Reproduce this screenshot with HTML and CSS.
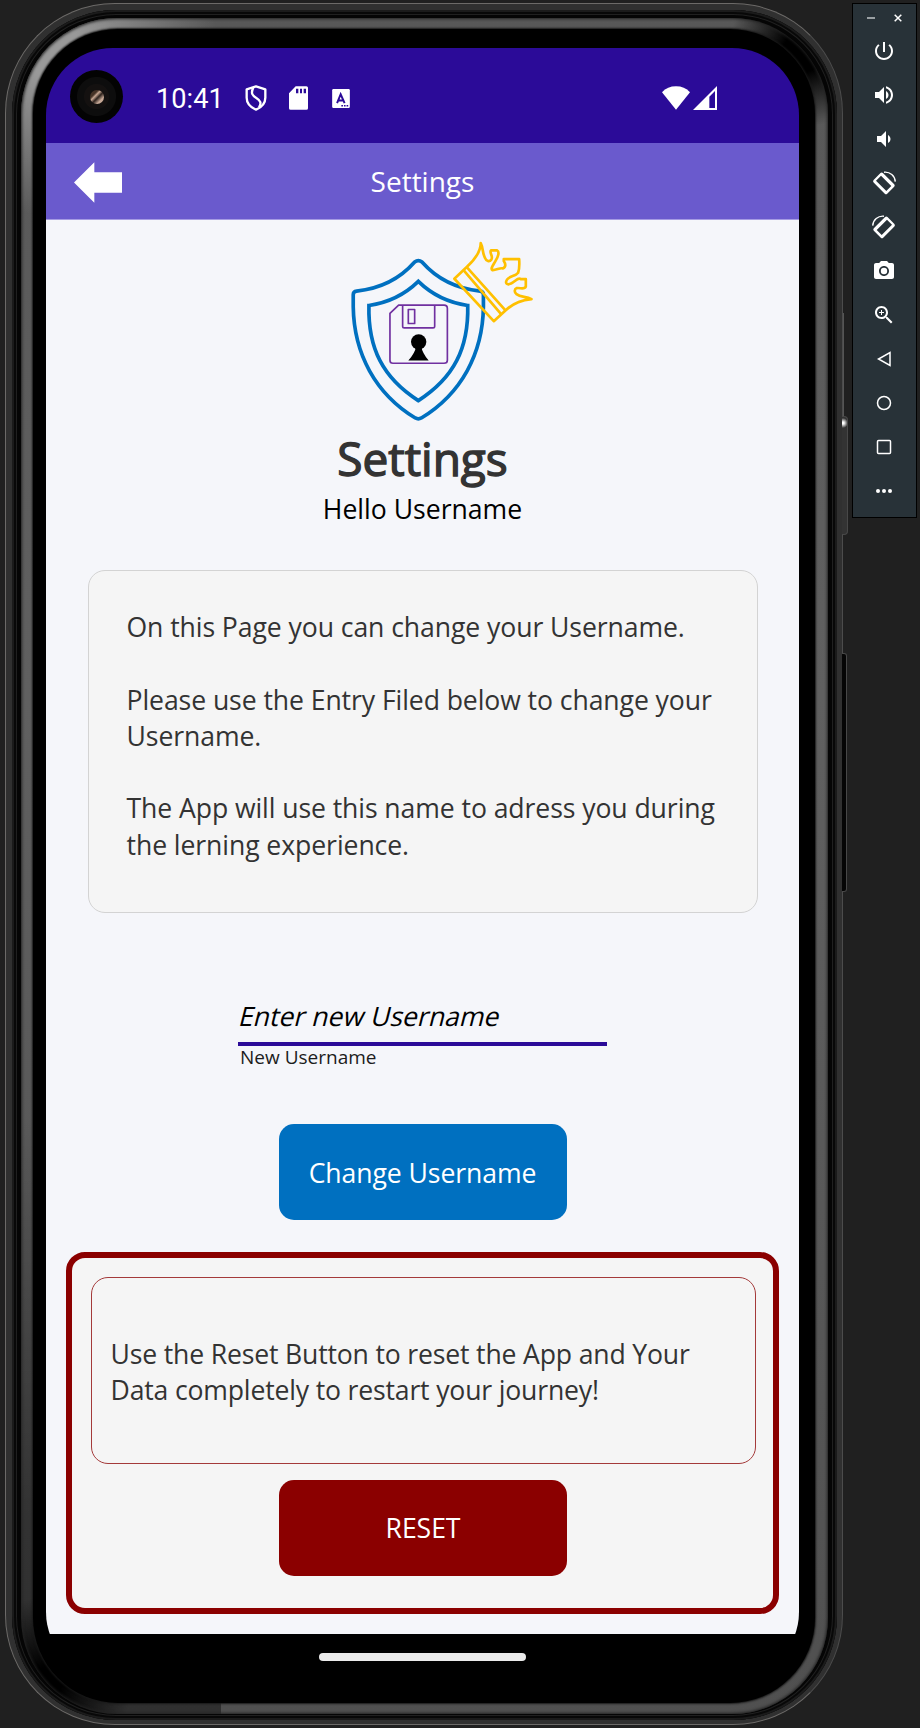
FILE: index.html
```html
<!DOCTYPE html>
<html lang="en">
<head>
<meta charset="utf-8">
<title>Settings</title>
<link rel="stylesheet" href="styles.css">
</head>
<body>
<div class="desktop">
  <div class="phone">
    <span class="side-line"></span>
    <span class="side-button power"></span>
    <span class="side-button volume"></span>
    <div class="groove">
      <div class="shine">
        <div class="bezel">
          <div class="screen">
            <div class="status">
              <span class="camera"><i></i></span>
              <span class="time">10:41</span>
              <svg class="st-shield" viewBox="0 0 66 78"><path d="M33 4 L61 13 V38 C61 56 49 67 33 74 C17 67 5 56 5 38 V13 Z" fill="none" stroke="#fff" stroke-width="7" stroke-linejoin="round"/><path d="M25 8 C16 25 23 32 34 39 C47 47 50 55 42 67" fill="none" stroke="#fff" stroke-width="7"/></svg>
              <svg class="st-sd" viewBox="0 0 57 71"><path fill="#fff" fill-rule="evenodd" d="M20 0H52Q57 0 57 5V66Q57 71 52 71H5Q0 71 0 66V21ZM21 8V21H28V8ZM33 8V21H39V8ZM44 8V21H51V8Z"/></svg>
              <svg class="st-a" viewBox="0 0 54 58"><rect width="54" height="58" rx="4" fill="#fff"/><path d="M15 43 L26 16 L38 43 M19 35H34" fill="none" stroke="#2b0b98" stroke-width="6"/><path d="M28 51h5m3 0h5m3 0h5" stroke="#2b0b98" stroke-width="5"/></svg>
              <svg class="st-wifi" viewBox="0 0 86 72"><path fill="#fff" d="M0 18 Q17 0 43 0 T86 18 L43 72Z"/></svg>
              <svg class="st-cell" viewBox="0 0 72 72"><path fill="#fff" fill-rule="evenodd" d="M72 0V72H0ZM66 15L49 32V66H66Z"/></svg>
            </div>
            <header class="appbar">
              <svg class="back" viewBox="0 0 144 122"><path fill="#fff" d="M0 61L61 0V30H144V92H61V122Z"/></svg>
              <span class="bar-title">Settings</span>
            </header>
            <main class="content">
              <svg class="logo" viewBox="-32.5 60 680 548" fill="none" stroke-linejoin="round">
                <g stroke="#0070c0">
                  <path stroke-width="11" d="M284 126 Q295 118 306 126 C350 176 412 206 480 213 Q490 214 490 224 V260 C488 400 424 520 304 593 Q295 598 286 593 C166 520 102 400 100 260 V224 Q100 214 110 213 C178 206 240 176 284 126Z"/>
                  <path stroke-width="11" stroke-linejoin="miter" d="M295 184 C334 222 386 248 443 256 C446 385 401 473 295 541 C189 473 144 385 147 256 C204 248 256 222 295 184Z"/>
                </g>
                <g stroke="#7030a0" stroke-width="5">
                  <path d="M236 255H372Q382 255 382 265V420Q382 429 372 429H219Q210 429 210 420V280Z"/>
                  <path d="M248 255V318Q248 323 253 323H339Q344 323 344 318V255"/>
                  <path d="M265 268H284V310H265Z"/>
                </g>
                <circle cx="296" cy="365" r="23" fill="#000"/>
                <path d="M288 378H304Q306 397 326 421H265Q286 397 288 378Z" fill="#000"/>
                <g stroke="#ffc000" stroke-width="8">
                  <path d="M403 176L440 141C466 117 482 95 482 69C489 82 487 98 494 112C499 124 508 127 514 118C520 107 506 97 513 91H531C539 95 534 111 526 123C517 138 511 146 517 150C528 151 540 142 548 145C558 141 557 132 551 123V117H597C598 130 598 146 594 158C586 169 569 167 561 178C553 191 562 196 573 190C586 184 593 171 602 177H617V199C613 210 600 202 590 204C582 207 582 217 589 222C602 232 618 228 634 237C600 240 575 253 556 271L521 303Z"/>
                  <path d="M431 151L543 282M440 141L556 271"/>
                </g>
              </svg>
              <h1 class="title">Settings</h1>
              <p class="hello">Hello Username</p>
              <section class="card">
                <p>On this Page you can change your Username.</p>
                <p>Please use the Entry Filed below to change your<br>Username.</p>
                <p>The App will use this name to adress you during<br>the lerning experience.</p>
              </section>
              <div class="field">
                <div class="entry"><span class="placeholder">Enter new Username</span></div>
                <label class="caption">New Username</label>
              </div>
              <button class="btn change">Change Username</button>
              <section class="danger">
                <div class="warning"><p>Use the Reset Button to reset the App and Your<br>Data completely to restart your journey!</p></div>
                <button class="btn reset">RESET</button>
              </section>
            </main>
            <nav class="gesture"><span class="pill"></span></nav>
          </div>
        </div>
      </div>
    </div>
  </div>

  <aside class="tools">
    <div class="window">
      <svg viewBox="0 0 8 8"><path d="M0 4H8" stroke="#9aa0a3" stroke-width="2"/></svg>
      <svg viewBox="0 0 8 8"><path d="M.7 .7L7.3 7.3M7.3 .7L.7 7.3" stroke="#fff" stroke-width="1.5"/></svg>
    </div>
    <svg viewBox="0 0 24 24"><path d="M13 3h-2v10h2V3zm4.83 2.17l-1.42 1.42C17.99 7.86 19 9.81 19 12c0 3.87-3.13 7-7 7s-7-3.13-7-7c0-2.19 1.01-4.14 2.58-5.42L6.17 5.17C4.23 6.82 3 9.26 3 12c0 4.97 4.03 9 9 9s9-4.03 9-9c0-2.74-1.23-5.18-3.17-6.83z"/></svg>
    <svg viewBox="0 0 24 24"><path d="M3 9v6h4l5 5V4L7 9H3zm13.5 3c0-1.77-1.02-3.29-2.5-4.03v8.05c1.48-.73 2.5-2.25 2.5-4.02zM14 3.23v2.06c2.89.86 5 3.54 5 6.71s-2.11 5.85-5 6.71v2.06c4.01-.91 7-4.49 7-8.77s-2.99-7.86-7-8.77z"/></svg>
    <svg viewBox="0 0 24 24"><path d="M18.5 12c0-1.77-1.02-3.29-2.5-4.03v8.05c1.48-.73 2.5-2.25 2.5-4.02zM5 9v6h4l5 5V4L9 9H5z"/></svg>
    <svg viewBox="0 0 24 24"><path fill-rule="evenodd" d="M8.500 2.100Q9.700 1 10.900 2.100L22.200 13.300Q23.300 14.500 22.200 15.700L15.200 22.700Q14 23.800 12.800 22.700L1.600 11.400Q.5 10.200 1.600 9ZM9 4.800L4 9.800L14.300 20.100L19.300 15.100Z"/><path d="M12 1.200C18 .5 23 5 23.300 10.600" fill="none" stroke="#fff" stroke-width="1.400"/></svg>
    <svg viewBox="0 0 24 24"><g transform="matrix(-1 0 0 1 24 0)"><path fill-rule="evenodd" d="M8.500 2.100Q9.700 1 10.900 2.100L22.200 13.300Q23.300 14.500 22.200 15.700L15.200 22.700Q14 23.800 12.800 22.700L1.600 11.400Q.5 10.200 1.600 9ZM9 4.800L4 9.800L14.300 20.100L19.300 15.100Z"/><path d="M12 1.200C18 .5 23 5 23.300 10.600" fill="none" stroke="#fff" stroke-width="1.400"/></g></svg>
    <svg viewBox="0 0 24 24"><path fill-rule="evenodd" d="M9 2L7.170 4H4c-1.100 0-2 .9-2 2v12c0 1.100.9 2 2 2h16c1.100 0 2-.9 2-2V6c0-1.100-.9-2-2-2h-3.170L15 2H9zm3 15c-2.760 0-5-2.240-5-5s2.240-5 5-5 5 2.240 5 5-2.240 5-5 5z"/><circle cx="12" cy="12" r="3.200"/></svg>
    <svg viewBox="0 0 24 24"><path d="M15.500 14h-.79l-.28-.27C15.410 12.590 16 11.110 16 9.500 16 5.910 13.090 3 9.500 3S3 5.910 3 9.500 5.910 16 9.500 16c1.610 0 3.090-.59 4.230-1.570l.27.28v.79l5 4.990L20.490 19l-4.990-5zm-6 0C7.010 14 5 11.990 5 9.500S7.010 5 9.500 5 14 7.010 14 9.500 11.990 14 9.500 14zM12 10h-2v2H9v-2H7V9h2V7h1v2h2v1z"/></svg>
    <svg class="line" viewBox="0 0 24 24"><path d="M18 5.500V18.500L6.500 12Z"/></svg>
    <svg class="line" viewBox="0 0 24 24"><circle cx="12" cy="12" r="6.500"/></svg>
    <svg class="line" viewBox="0 0 24 24"><rect x="5.500" y="5.500" width="13" height="13" rx="1"/></svg>
    <svg viewBox="0 0 24 24"><circle cx="6" cy="12" r="2"/><circle cx="12" cy="12" r="2"/><circle cx="18" cy="12" r="2"/></svg>
  </aside>
</div>
</body>
</html>
```
FILE: styles.css
```css
* { box-sizing: border-box; margin: 0; }
html, body { background: #202020; }
body { font-family: "Open Sans", "Noto Sans", sans-serif; overflow: hidden; }
svg { display: block; flex: none; }

.desktop { display: flex; align-items: flex-start; width: 920px; height: 1728px; padding: 3px 3px 3px 5px; }

/* Device frame, from the outer rim inwards */
.phone { position: relative; width: 838px; height: 1722px; flex: none; padding: 6px 5px 4px 6px; border-radius: 110px; border: 1px solid #6c6a68; border-right-color: #4c4c4c; background: #303030; margin-right: 9px; }
.groove { height: 100%; padding: 8px 9px 6px; border-radius: 104px; background: #050505; box-shadow: inset 0 0 0 2px #1b1b1b, inset 0 0 0 4px #080808, inset 0 0 0 5px #202020; }
.shine { height: 100%; padding: 11px 13px 11px 12px; border-radius: 96px;
  background:
    radial-gradient(circle at 782px 34px, #000 20px, transparent 75px),
    radial-gradient(circle at 26px 1664px, #000 15px, transparent 85px),
    radial-gradient(circle at 26px 26px, #999 30px, transparent 170px),
    linear-gradient(transparent 1100px, rgba(0, 0, 0, .4) 1500px) 0 0 / 200px 100% no-repeat,
    linear-gradient(#585858, #606060 40%, #505050);
  box-shadow: inset 0 0 3px 1px #222; }
.bezel { height: 100%; padding: 19px 16px 24px 13px; border-radius: 85px; background: #000; box-shadow: 0 0 2px 1px #181818; }
.screen { position: relative; display: flex; flex-direction: column; height: 100%; border-radius: 67px; overflow: hidden; background: #000; }

.side-line { position: absolute; right: -2px; top: 309px; width: 1px; height: 104px; background: #555; }
.side-button { position: absolute; border: 1px solid #484848; border-left: 0; }
.power { right: -6px; top: 412px; width: 6px; height: 119px; border-radius: 0 4px 4px 0; background: radial-gradient(circle at 1px 6px, #fff 1px, transparent 5px), #333; }
.volume { right: -5px; top: 649px; width: 5px; height: 239px; border-radius: 0 3px 3px 0; background: #050505; }

/* Status bar */
.status { flex: none; display: flex; align-items: center; height: 95px; padding: 5px 82px 0 110px; background: #2b0b98; }
.camera { position: absolute; left: 24px; top: 22px; width: 53px; height: 53px; border-radius: 50%; background: radial-gradient(circle, #141110 12px, #0d0d0d 13px 19px, #030303 20px); display: grid; place-items: center; }
.camera i { width: 14px; height: 14px; border-radius: 50%; background: linear-gradient(135deg, #453226 30%, #c9a894 40%, #2c211c 55%, #c6a896 75%); }
.time { width: 89px; font: 27.200px/32px Roboto, sans-serif; color: #fff; padding-top: 2px; }
.st-shield { width: 22px; height: 26px; margin-right: 22px; }
.st-sd { width: 19px; height: 24px; margin-right: 24px; }
.st-a { width: 18px; height: 19px; }
.st-wifi { width: 28px; height: 24px; margin-left: auto; margin-right: 3px; }
.st-cell { width: 24px; height: 24px; }

/* App bar */
.appbar { flex: none; display: grid; grid-template-columns: 1fr auto 1fr; align-items: center; height: 77px; padding: 0 28px; background: #6a5acd; border-bottom: 1px solid #a59be3; color: #fff; font-size: 28px; }
.back { width: 48px; height: 41px; margin-top: 3px; }
.bar-title { line-height: 38px; }

.content { flex: none; display: flex; flex-direction: column; align-items: center; height: 1414px; padding-top: 20px; background: #f5f6fa; }
.logo { width: 227px; height: 183px; }
.title { margin-top: 4px; font-size: 46px; font-weight: 400; line-height: 63px; color: #333; -webkit-text-stroke: 1.400px #333; }
.hello { margin-top: 1px; font-size: 26.600px; line-height: 36px; color: #000; }

.card { width: 670px; height: 343px; margin-top: 43px; padding: 38px 37px; border: 1px solid #d3d3d3; border-radius: 17px; background: #f5f5f5; color: #333; font-size: 26.600px; line-height: 36.300px; letter-spacing: -.08px; }
.card p { margin-left: 1px; }
.card p + p { margin-top: 36.300px; }

.field { width: 369px; margin-top: 84px; }
.entry { height: 49px; border-bottom: 4px solid #2b0b98; padding: 1px 0 0 2px; }
.placeholder { display: inline-block; font-size: 26.600px; line-height: 36px; color: #000; transform: skewX(-14deg); }
.caption { display: block; height: 26px; padding-left: 2px; font-size: 19px; line-height: 22px; color: #1c1c1c; }

.btn { display: block; width: 288px; height: 96px; padding: 2px 0 0; border: 0; border-radius: 15px; color: #fff; font: 26.600px/36px "Open Sans", sans-serif; letter-spacing: -.08px; }
.change { margin-top: 52px; background: #0070c0; }
.reset { margin-left: 1px; padding-top: 0; background: #8b0000; }

.danger { display: flex; flex-direction: column; align-items: center; width: 713px; height: 362px; margin-top: 32px; padding-top: 19px; border: 6px solid #8b0000; border-radius: 19px; background: #f5f5f5; }
.warning { display: flex; align-items: center; width: 665px; height: 187px; margin: 0 0 16px 1px; padding: 3px 0 0 19px; border: 1px solid #a43a3a; border-radius: 17px; color: #333; font-size: 26.600px; line-height: 36.300px; letter-spacing: -.17px; }

.gesture { flex: 1; display: flex; justify-content: center; background: #000; padding-top: 19px; }
.pill { width: 207px; height: 8px; border-radius: 4px; background: #ebebeb; }

/* Emulator toolbar */
.tools { display: flex; flex-direction: column; align-items: center; gap: 20px; width: 65px; height: 515px; padding-right: 1px; border: 1px solid #000; background: #283238; }
.tools svg { width: 24px; height: 24px; fill: #fff; }
.window { display: flex; gap: 19px; padding: 10px 0 0 1px; height: 15px; }
.window svg { width: 8px; height: 8px; }
.tools .line { fill: none; stroke: #fff; stroke-width: 1.500; }
```
